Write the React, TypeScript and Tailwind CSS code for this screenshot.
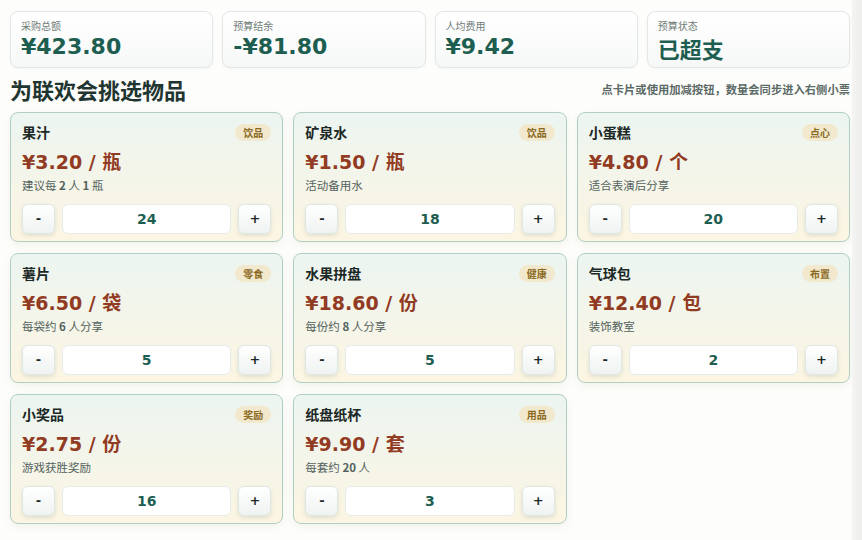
import { useState } from "react";

type Item = {
  name: string;
  tag: string;
  price: number;
  unit: string;
  note: React.ReactNode;
  qty: number;
};

const FONT = "font-['DejaVu_Sans','Noto_Sans_CJK_SC',sans-serif]";
const CJK = "font-['Noto_Sans_CJK_SC',sans-serif]";

const ITEMS: Item[] = [
  { name: "果汁", tag: "饮品", price: 3.2, unit: "瓶", note: <>建议每 <b>2</b> 人 <b>1</b> 瓶</>, qty: 24 },
  { name: "矿泉水", tag: "饮品", price: 1.5, unit: "瓶", note: "活动备用水", qty: 18 },
  { name: "小蛋糕", tag: "点心", price: 4.8, unit: "个", note: "适合表演后分享", qty: 20 },
  { name: "薯片", tag: "零食", price: 6.5, unit: "袋", note: <>每袋约 <b>6</b> 人分享</>, qty: 5 },
  { name: "水果拼盘", tag: "健康", price: 18.6, unit: "份", note: <>每份约 <b>8</b> 人分享</>, qty: 5 },
  { name: "气球包", tag: "布置", price: 12.4, unit: "包", note: "装饰教室", qty: 2 },
  { name: "小奖品", tag: "奖励", price: 2.75, unit: "份", note: "游戏获胜奖励", qty: 16 },
  { name: "纸盘纸杯", tag: "用品", price: 9.9, unit: "套", note: <>每套约 <b>20</b> 人</>, qty: 3 },
];

const BUDGET = 342;
const PEOPLE = 45;

function Stat({ label, children }: { label: string; children: React.ReactNode }) {
  return (
    <div className="h-[57px] rounded-lg border border-[#e2e8e5] bg-gradient-to-b from-white to-[#f6f8f7] px-[10px] pt-[7px] shadow-[0_1px_3px_rgba(0,0,0,0.04)]">
      <div className={`${CJK} text-[10px] leading-[14px] text-[#6f7c78]`}>{label}</div>
      {children}
    </div>
  );
}

function StepButton({ label, onClick }: { label: string; onClick: () => void }) {
  return (
    <button
      type="button"
      onClick={onClick}
      className={`${FONT} flex h-[30px] w-[33px] shrink-0 items-center justify-center rounded-md border border-[#dfe7e3] bg-gradient-to-b from-white to-[#eef3f1] text-[13px] font-bold text-[#1c2a27] shadow-[0_2px_4px_rgba(40,70,60,0.12)]`}
    >
      {label}
    </button>
  );
}

function ItemCard({ item, qty, setQty }: { item: Item; qty: number; setQty: (n: number) => void }) {
  return (
    <div className="h-[130px] rounded-lg border border-[#b0cfc4] bg-gradient-to-b from-[#ecf5f1] to-[#fcf5e2] px-[11px] pt-[10px] shadow-[0_3px_8px_rgba(120,100,40,0.08)]">
      <div className="flex h-[18px] items-center justify-between">
        <span className={`${CJK} text-[14px] font-semibold text-[#1b2826]`}>{item.name}</span>
        <span className={`${CJK} rounded-full bg-[#f1e8cd] px-[8px] text-[10px] font-semibold leading-[17px] text-[#8b6a1f]`}>
          {item.tag}
        </span>
      </div>
      <div className={`${FONT} mt-[7px] text-[19px] font-bold leading-[26px] text-[#923b23]`}>
        ¥{item.price.toFixed(2)} / <span className={CJK}>{item.unit}</span>
      </div>
      <div className={`${FONT} mt-[2px] text-[11.5px] leading-[16px] text-[#53625e] [&_b]:font-bold`}>
        <span className={CJK}>{item.note}</span>
      </div>
      <div className="mt-[10px] flex items-center gap-[7px]">
        <StepButton label="-" onClick={() => setQty(Math.max(0, qty - 1))} />
        <div className={`${FONT} flex h-[30px] flex-1 items-center justify-center rounded-md border border-[#e8ece9] bg-white text-[14px] font-bold text-[#1d5e51]`}>
          {qty}
        </div>
        <StepButton label="+" onClick={() => setQty(qty + 1)} />
      </div>
    </div>
  );
}

export default function App() {
  const [qtys, setQtys] = useState(ITEMS.map((i) => i.qty));
  const total = ITEMS.reduce((sum, it, i) => sum + it.price * qtys[i], 0);
  const left = BUDGET - total;
  const fmt = (n: number) => (n < 0 ? "-¥" : "¥") + Math.abs(n).toFixed(2);
  const valueCls = `${FONT} text-[22px] font-bold leading-[28px] text-[#1d5e51]`;

  return (
    <div className="flex h-[540px] w-[862px] overflow-hidden bg-[#fdfdfb]">
      <main className="w-[852px] shrink-0 pl-[10px] pr-[2px] pt-[11px]">
        <div className="grid grid-cols-4 gap-[9px]">
          <Stat label="采购总额">
            <div className={valueCls}>{fmt(total)}</div>
          </Stat>
          <Stat label="预算结余">
            <div className={valueCls}>{fmt(left)}</div>
          </Stat>
          <Stat label="人均费用">
            <div className={valueCls}>{fmt(total / PEOPLE)}</div>
          </Stat>
          <Stat label="预算状态">
            <div className={`${CJK} mt-[2px] text-[22px] font-bold leading-[26px] text-[#1d5e51]`}>
              {left < 0 ? "已超支" : "未超支"}
            </div>
          </Stat>
        </div>

        <div className="mt-[8px] flex h-[26px] items-center justify-between">
          <h1 className={`${CJK} text-[22px] font-bold text-[#1f3531]`}>为联欢会挑选物品</h1>
          <p className={`${CJK} text-[11.3px] font-semibold text-[#5b6a66]`}>
            点卡片或使用加减按钮，数量会同步进入右侧小票
          </p>
        </div>

        <div className="mt-[10px] grid grid-cols-3 gap-x-[10px] gap-y-[11px]">
          {ITEMS.map((item, i) => (
            <ItemCard
              key={item.name}
              item={item}
              qty={qtys[i]}
              setQty={(n) => setQtys(qtys.map((q, j) => (j === i ? n : q)))}
            />
          ))}
        </div>
      </main>
      <aside className="flex-1 bg-gradient-to-r from-[#f4f5f3] to-[#eeefed]" />
    </div>
  );
}
